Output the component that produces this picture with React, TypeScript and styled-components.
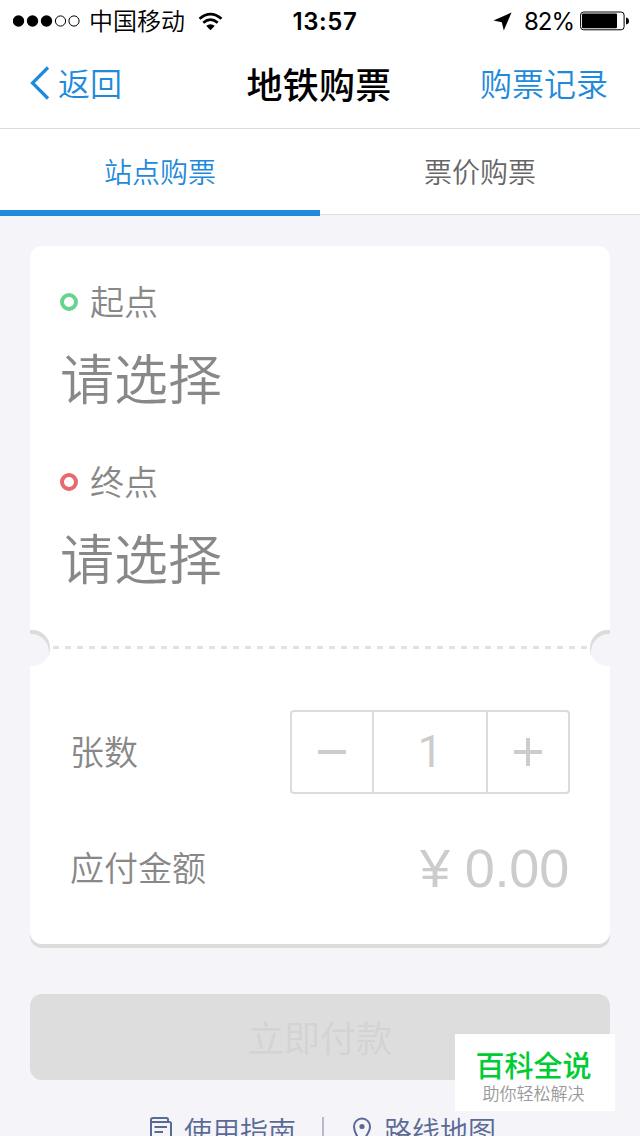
import React from "react";
import styled, { createGlobalStyle } from "styled-components";

const Global = createGlobalStyle`
  * { box-sizing: border-box; }
  body {
    margin: 0;
    background: #f4f4f9;
    font-family: "Liberation Sans", "Noto Sans CJK SC", sans-serif;
  }
`;

const Screen = styled.div`
  position: relative;
  width: 640px;
  height: 1136px;
  overflow: hidden;
  display: flex;
  flex-direction: column;
  background: #f4f4f9;
`;

const Label = styled.span<{ $size: number; $color?: string; $weight?: number }>`
  font-family: "Noto Sans CJK SC", sans-serif;
  font-size: ${(p) => p.$size}px;
  line-height: ${(p) => p.$size}px;
  font-weight: ${(p) => p.$weight ?? 350};
  color: ${(p) => p.$color ?? "#888"};
  white-space: nowrap;
`;

const StatusBar = styled.header`
  flex: none;
  height: 40px;
  background: #fff;
  display: grid;
  grid-template-columns: 1fr auto 1fr;
  align-items: center;
  padding: 0 11px 0 13px;
`;

const StatusGroup = styled.div<{ $end?: boolean }>`
  display: flex;
  align-items: center;
  justify-content: ${(p) => (p.$end ? "flex-end" : "flex-start")};
`;

const Carrier = styled(Label)`
  margin: 0 13px 2px 9px;
`;

const Clock = styled.span`
  font: 600 24px/40px Inter, sans-serif;
  letter-spacing: 0.6px;
  padding: 2px 0 0 8px;
`;

const Percent = styled.span`
  font: 400 24px/40px Inter, sans-serif;
  letter-spacing: -1px;
  margin: 2px 6px 0 12px;
`;

const NavBar = styled.nav`
  flex: none;
  height: 89px;
  background: #fff;
  border-bottom: 1px solid #dcdcdf;
  display: grid;
  grid-template-columns: 1fr auto 1fr;
  align-items: center;
  padding: 0 32px 4px 30px;
`;

const NavTitle = styled(Label)`
  padding-top: 2px;
  letter-spacing: 0.3px;
`;

const BackButton = styled.a`
  display: flex;
  align-items: center;
  gap: 8px;

  svg {
    margin-top: 2px;
  }
`;

const NavAction = styled.a`
  display: flex;
  justify-content: flex-end;
`;

const Tabs = styled.div`
  flex: none;
  height: 87px;
  display: grid;
  grid-template-columns: 1fr 1fr;
`;

const Tab = styled.div<{ $active?: boolean }>`
  height: ${(p) => (p.$active ? 87 : 86)}px;
  padding-top: 28px;
  text-align: center;
  background: #fff;
  line-height: 28px;
  border-bottom: ${(p) => (p.$active ? "6px solid #1f8adb" : "1px solid #dfdfe2")};
`;

const Card = styled.section`
  flex: none;
  width: 580px;
  height: 698px;
  margin: 30px 0 0 30px;
  background: #fff;
  border-radius: 12px;
  box-shadow: 0 4px 0 #dcdcdc;
`;

const Stations = styled.div`
  height: 384px;
  padding: 37px 30px 0;
`;

const Station = styled.div`
  height: 180px;
`;

const StationHead = styled.div`
  display: flex;
  align-items: center;
  gap: 12px;
  height: 38px;

  ${Label} {
    padding-bottom: 2px;
  }
`;

const Ring = styled.i<{ $color: string }>`
  width: 18px;
  height: 18px;
  border: 4px solid ${(p) => p.$color};
  border-radius: 50%;
`;

const StationValue = styled.div`
  margin-top: 29px;
  display: flex;
`;

const Perforation = styled.div`
  height: 36px;
  display: flex;
  justify-content: space-between;
`;

const Notch = styled.i<{ $right?: boolean }>`
  width: 20px;
  height: 36px;
  background: #f4f4f9;
  border-radius: ${(p) => (p.$right ? "18px 0 0 18px" : "0 18px 18px 0")};
  box-shadow: inset ${(p) => (p.$right ? "1px" : "-1px")} 4px 0 #dcdcdc;
`;

const Dashes = styled.i`
  width: 534px;
  height: 3px;
  margin-top: 16px;
  background: repeating-linear-gradient(90deg, #e2e2e2 0 6px, transparent 6px 12px);
`;

const Row = styled.div`
  height: 84px;
  padding: 0 40px;
  display: flex;
  align-items: center;
  justify-content: space-between;
`;

const RowLabel = styled(Label)`
  padding-bottom: 2px;
`;

const Summary = styled.div`
  padding-top: 44px;
  display: flex;
  flex-direction: column;
  gap: 32px;
`;

const Stepper = styled.div`
  width: 280px;
  height: 84px;
  display: grid;
  grid-template-columns: 80px 1fr 80px;
  border: 2px solid #dcdcdc;
  border-radius: 4px;
`;

const StepCell = styled.div<{ $middle?: boolean }>`
  display: flex;
  align-items: center;
  justify-content: center;
  border: solid #dcdcdc;
  border-width: ${(p) => (p.$middle ? "0 2px" : "0")};
  color: #ccc;
  font: 400 44px/78px Roboto, sans-serif;
`;

const Amount = styled.span`
  font-size: 54px;
  line-height: 60px;
  letter-spacing: -0.2px;
  margin-right: 1px;
  color: #ccc;
`;

const PayButton = styled.div`
  flex: none;
  width: 580px;
  height: 86px;
  margin: 50px 0 0 30px;
  padding-bottom: 2px;
  border-radius: 12px;
  background: #ddd;
  display: flex;
  align-items: center;
  justify-content: center;
`;

const Footer = styled.footer`
  flex: none;
  display: flex;
  align-items: center;
  height: 28px;
  margin: 36px 0 0 150px;
`;

const FooterLink = styled.a`
  display: flex;
  align-items: center;
`;

const Divider = styled.i`
  width: 2px;
  height: 26px;
  margin: 0 28px 0 26px;
  background: #b4b9cb;
`;

const Watermark = styled.aside`
  position: absolute;
  left: 455px;
  top: 1034px;
  width: 160px;
  height: 77px;
  background: #fff;
  display: flex;
  flex-direction: column;
  align-items: center;
  gap: 5px;
  padding: 16px 3px 0 0;
`;

const blue = "#1f8adb";
const slate = "#5a6a96";

export default function App() {
  return (
    <>
      <Global />
      <Screen>
        <StatusBar>
          <StatusGroup>
            <svg width="67" height="12" viewBox="0 0 67 12">
              {[5.5, 19.5, 33.5].map((x) => (
                <circle key={x} cx={x} cy="6" r="5.7" />
              ))}
              {[47.5, 61].map((x) => (
                <circle key={x} cx={x} cy="6" r="5.1" fill="none" stroke="#000" />
              ))}
            </svg>
            <Carrier $size={24} $color="#000">中国移动</Carrier>
            <svg width="25" height="19" viewBox="0 0 26 19" fill="none" stroke="#000" strokeWidth="2.8">
              <path d="M1.6 6.6Q13-3 24.4 6.6" />
              <path d="M5.5 10.8Q13 4.4 20.5 10.8" />
              <path d="M13 18.5L8.5 14Q13 10.6 17.5 14Z" fill="#000" stroke="none" />
            </svg>
          </StatusGroup>
          <Clock>13:57</Clock>
          <StatusGroup $end>
            <svg width="19" height="19" viewBox="0 0 19 19">
              <path d="M18.5 .5L.5 8.5L8.8 10.2L10.8 18.5Z" />
            </svg>
            <Percent>82%</Percent>
            <svg width="49" height="20" viewBox="0 0 49 20">
              <rect x=".6" y="1" width="43.5" height="17.8" rx="3" fill="none" stroke="#000" />
              <rect x="2" y="2.5" width="35" height="14.8" rx="1" />
              <path d="M46 6.5Q49 7 49 10T46 13.5Z" />
            </svg>
          </StatusGroup>
        </StatusBar>

        <NavBar>
          <BackButton>
            <svg width="20" height="34" viewBox="0 0 20 34" fill="none" stroke={blue} strokeWidth="3.2">
              <path d="M18 1.5L2.5 17L18 32.5" />
            </svg>
            <Label $size={32} $color={blue}>返回</Label>
          </BackButton>
          <NavTitle $size={36} $color="#000" $weight={500}>地铁购票</NavTitle>
          <NavAction>
            <Label $size={32} $color={blue}>购票记录</Label>
          </NavAction>
        </NavBar>

        <Tabs>
          <Tab $active>
            <Label $size={28} $color={blue}>站点购票</Label>
          </Tab>
          <Tab>
            <Label $size={28} $color="#666">票价购票</Label>
          </Tab>
        </Tabs>

        <Card>
          <Stations>
            <Station>
              <StationHead>
                <Ring $color="#66d48f" />
                <Label $size={34}>起点</Label>
              </StationHead>
              <StationValue>
                <Label $size={54}>请选择</Label>
              </StationValue>
            </Station>
            <Station>
              <StationHead>
                <Ring $color="#e66a70" />
                <Label $size={34}>终点</Label>
              </StationHead>
              <StationValue>
                <Label $size={54}>请选择</Label>
              </StationValue>
            </Station>
          </Stations>
          <Perforation>
            <Notch />
            <Dashes />
            <Notch $right />
          </Perforation>
          <Summary>
            <Row>
              <RowLabel $size={34}>张数</RowLabel>
              <Stepper>
                <StepCell>
                  <svg width="28" height="28" stroke="#ccc" strokeWidth="4">
                    <path d="M0 14H28" />
                  </svg>
                </StepCell>
                <StepCell $middle>1</StepCell>
                <StepCell>
                  <svg width="28" height="28" stroke="#ccc" strokeWidth="4">
                    <path d="M0 14H28M14 0V28" />
                  </svg>
                </StepCell>
              </Stepper>
            </Row>
            <Row>
              <RowLabel $size={34}>应付金额</RowLabel>
              <Amount>¥ 0.00</Amount>
            </Row>
          </Summary>
        </Card>

        <PayButton>
          <Label $size={36} $color="#d3d3d3">立即付款</Label>
        </PayButton>

        <Footer>
          <FooterLink>
            <svg width="34" height="26" viewBox="0 0 34 26" fill="none" stroke={slate} strokeWidth="2">
              <path d="M18 4.5V2.5Q18 1 16.5 1H3Q1 1 1 3V25H21V6.5Q21 5 19.5 5H1M4.5 10H17M4.5 15H13" />
            </svg>
            <Label $size={28} $color={slate}>使用指南</Label>
          </FooterLink>
          <Divider />
          <FooterLink>
            <svg width="32" height="26" viewBox="0 0 32 26" fill="none" stroke={slate} strokeWidth="2">
              <path d="M9.5 25C5 20 2 14 2 9.5A8 8 0 0 1 18 9.5C18 14 14 20 9.5 25Z" />
              <circle cx="10" cy="9.5" r="2.6" fill={slate} stroke="none" />
            </svg>
            <Label $size={28} $color={slate}>路线地图</Label>
          </FooterLink>
        </Footer>

        <Watermark>
          <Label $size={29} $color="#0c3" $weight={500}>百科全说</Label>
          <Label $size={17} $color="#999">助你轻松解决</Label>
        </Watermark>
      </Screen>
    </>
  );
}
